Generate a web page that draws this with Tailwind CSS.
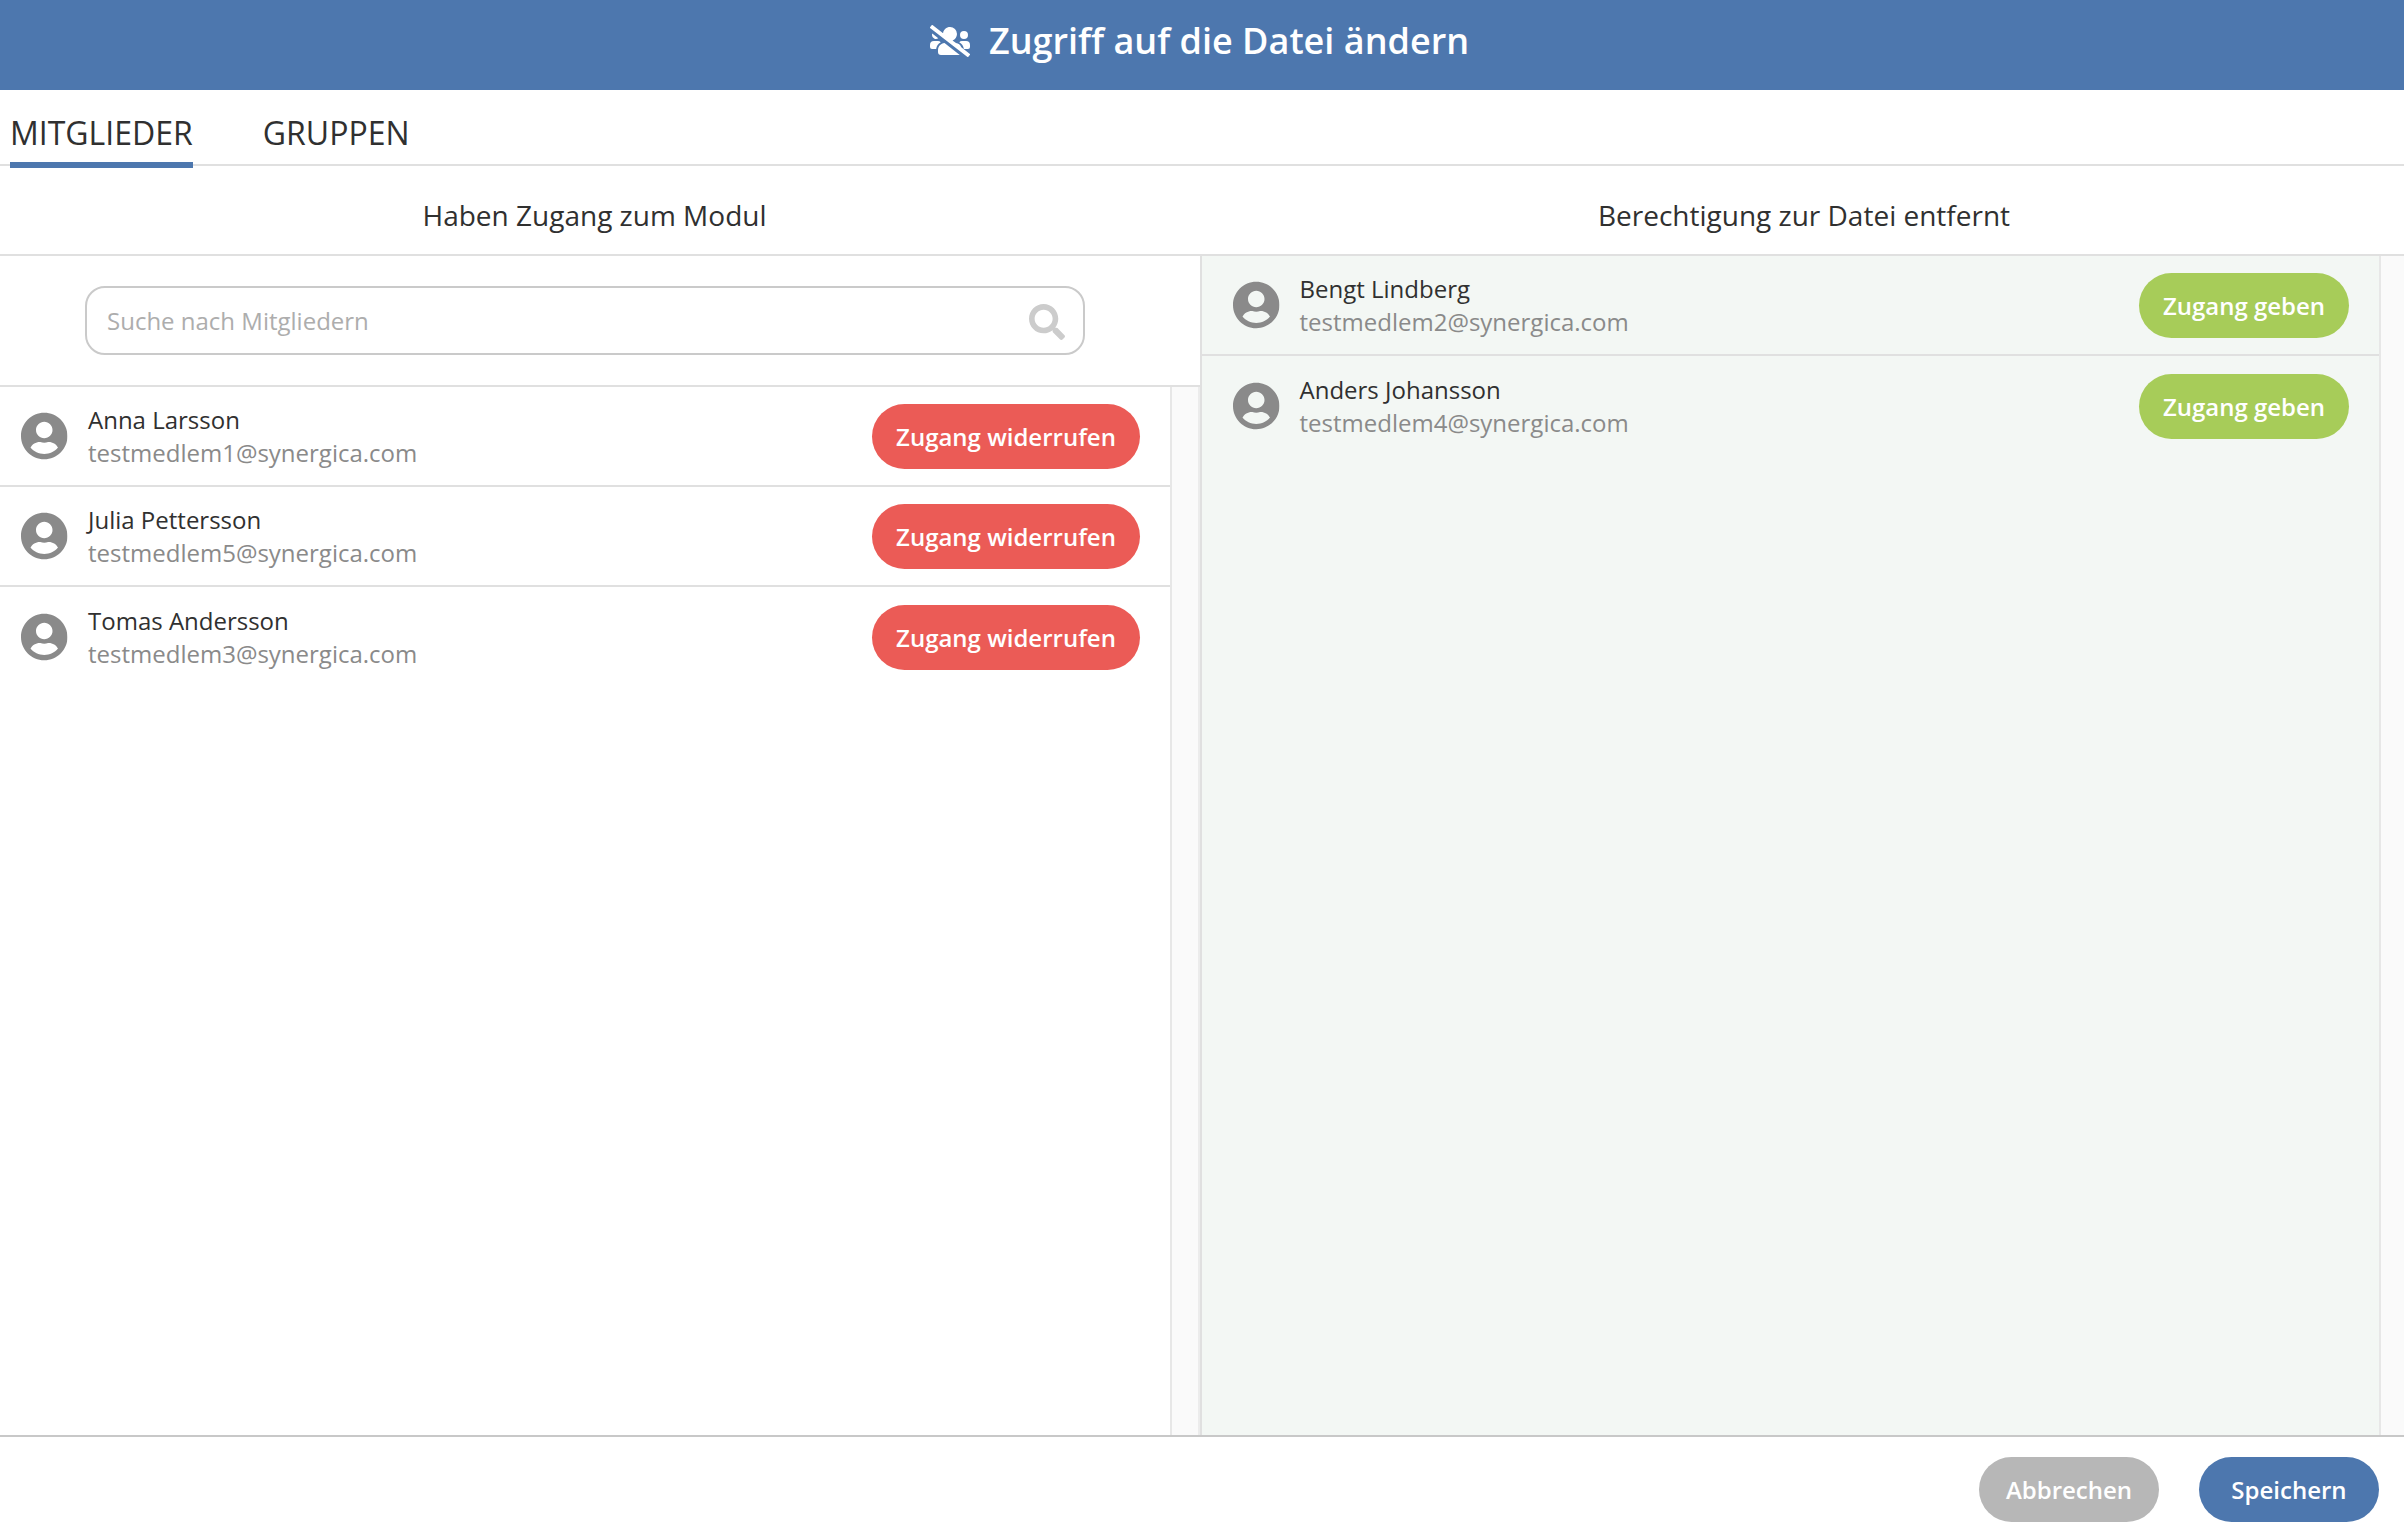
<!DOCTYPE html>
<html lang="de">
<head>
    <meta charset="utf-8"/>
    <title>Zugriff auf die Datei ändern</title>
    <script src="https://cdn.jsdelivr.net/npm/@tailwindcss/browser@4"></script>
</head>
<body class="bg-white text-[#303030] font-['Open_Sans',sans-serif] text-[24px] leading-[33px]">
    <!-- Icons -->
    <svg class="hidden">
        <symbol id="icon-user" viewBox="0 0 496 512">
            <path fill="currentColor" d="M248 8C111 8 0 119 0 256s111 248 248 248 248-111 248-248S385 8 248 8zm0 96c48.6 0 88 39.4 88 88s-39.4 88-88 88-88-39.4-88-88 39.4-88 88-88zm0 344c-58.7 0-111.3-26.6-146.5-68.2 18.8-35.4 55.6-59.8 98.5-59.8 2.4 0 4.8.4 7.1 1.1 13 4.2 26.6 6.9 40.9 6.9 14.3 0 28-2.7 40.9-6.9 2.3-.7 4.7-1.1 7.1-1.1 42.9 0 79.7 24.4 98.5 59.8C359.3 421.4 306.7 448 248 448z"/>
        </symbol>
    </svg>
    <div class="flex h-screen flex-col overflow-hidden">
        <!-- Title Bar -->
        <header class="flex h-[90px] shrink-0 items-center justify-center bg-[#4d77ae] pr-[5px] pb-[10px] text-white">
            <svg class="mt-[2px] mr-[19px] h-8 w-10" viewBox="0 0 640 512">
                <path fill="currentColor" d="M132.65,212.32,36.21,137.78A63.4,63.4,0,0,0,32,160a63.84,63.84,0,0,0,100.65,52.32Zm40.44,62.28A63.79,63.79,0,0,0,128,256H64A64.06,64.06,0,0,0,0,320v32a32,32,0,0,0,32,32H97.91A146.62,146.62,0,0,1,173.09,274.6ZM544,224a64,64,0,1,0-64-64A64.06,64.06,0,0,0,544,224ZM500.56,355.11a114.24,114.24,0,0,0-84.47-65.28L361,247.23c41.46-16.3,71-55.92,71-103.23A111.93,111.93,0,0,0,320,32c-57.14,0-103.69,42.83-110.6,98.08L45.46,3.38A16,16,0,0,0,23,6.19L3.37,31.46A16,16,0,0,0,6.18,53.91L594.53,508.63A16,16,0,0,0,617,505.82l19.64-25.27a16,16,0,0,0-2.81-22.45ZM128,403.21V432a48,48,0,0,0,48,48H464a47.45,47.45,0,0,0,12.57-1.87L232,289.13C173.74,294.83,128,343.42,128,403.21ZM576,256H512a63.79,63.79,0,0,0-45.09,18.6A146.29,146.29,0,0,1,542,384h66a32,32,0,0,0,32-32V320A64.06,64.06,0,0,0,576,256Z"/>
            </svg>
            <h1 class="text-[36px] font-semibold leading-[49px]">Zugriff auf die Datei ändern</h1>
        </header>

        <!-- Tabs -->
        <nav class="flex h-[76px] shrink-0 gap-[70px] border-b-2 border-[#e0e0e0] pl-[10px] text-[32px] leading-[44px]">
            <button class="h-[78px] border-b-6 border-[#4d77ae] pt-[13px]">MITGLIEDER</button>
            <button class="h-[78px] border-b-6 border-transparent pt-[13px]">GRUPPEN</button>
        </nav>

        <!-- Column Titles -->
        <div class="flex h-[90px] shrink-0 items-center border-b-2 border-[#e0e0e0] pt-[10px] text-[28px] leading-[38px]">
            <h2 class="w-[1189px] text-center">Haben Zugang zum Modul</h2>
            <h2 class="ml-[16px] w-[1198px] text-center">Berechtigung zur Datei entfernt</h2>
        </div>

        <!-- Main Content -->
        <main class="flex flex-1">
            <!-- Left Section -->
            <section class="flex w-[1202px] flex-col border-r-2 border-[#e0e0e0]">
                <div class="h-[131px] border-b-2 border-[#e0e0e0] pt-[30px] pl-[85px]">
                    <div class="flex h-[69px] w-[1000px] items-center justify-between rounded-[20px] border-2 border-[#cacaca] pr-[18px] pl-[20px]">
                        <input class="w-[800px] outline-none placeholder:text-[#adadad]" type="text" placeholder="Suche nach Mitgliedern"/>
                        <svg class="mt-[2px] size-9 text-[#cccccc]" viewBox="0 0 512 512">
                            <path fill="currentColor" d="M505 442.7L405.3 343c-4.5-4.5-10.6-7-17-7H372c27.6-35.3 44-79.7 44-128C416 93.1 322.9 0 208 0S0 93.1 0 208s93.1 208 208 208c48.3 0 92.7-16.4 128-44v16.3c0 6.4 2.5 12.5 7 17l99.7 99.7c9.4 9.4 24.6 9.4 33.9 0l28.3-28.3c9.4-9.4 9.4-24.6.1-34zM208 336c-70.7 0-128-57.2-128-128 0-70.7 57.2-128 128-128 70.7 0 128 57.2 128 128 0 70.7-57.2 128-128 128z"/>
                        </svg>
                    </div>
                </div>
                <div class="flex flex-1">
                    <ul class="w-[1170px]">
                        <li class="flex h-[100px] items-start border-b-2 border-[#e0e0e0] pt-[17px] pr-[30px] pl-[21px]">
                            <svg class="mt-[8px] h-[48px] w-[46.5px] text-[#8a8a8a]"><use href="#icon-user"/></svg>
                            <div class="-mt-px ml-[20.5px] flex-1">
                                <p>Anna Larsson</p>
                                <p class="text-[#8a8a8a]">testmedlem1@synergica.com</p>
                            </div>
                            <button class="h-[65px] w-[268px] rounded-full bg-[#eb5b56] font-semibold text-white">Zugang widerrufen</button>
                        </li>
                        <li class="flex h-[100px] items-start border-b-2 border-[#e0e0e0] pt-[17px] pr-[30px] pl-[21px]">
                            <svg class="mt-[8px] h-[48px] w-[46.5px] text-[#8a8a8a]"><use href="#icon-user"/></svg>
                            <div class="-mt-px ml-[20.5px] flex-1">
                                <p>Julia Pettersson</p>
                                <p class="text-[#8a8a8a]">testmedlem5@synergica.com</p>
                            </div>
                            <button class="h-[65px] w-[268px] rounded-full bg-[#eb5b56] font-semibold text-white">Zugang widerrufen</button>
                        </li>
                        <li class="flex h-[100px] items-start pt-[18px] pr-[30px] pl-[21px]">
                            <svg class="mt-[8px] h-[48px] w-[46.5px] text-[#8a8a8a]"><use href="#icon-user"/></svg>
                            <div class="-mt-px ml-[20.5px] flex-1">
                                <p>Tomas Andersson</p>
                                <p class="text-[#8a8a8a]">testmedlem3@synergica.com</p>
                            </div>
                            <button class="h-[65px] w-[268px] rounded-full bg-[#eb5b56] font-semibold text-white">Zugang widerrufen</button>
                        </li>
                    </ul>
                    <!-- Scrollbar track -->
                    <div class="w-[30px] border-x-2 border-l-[#e7e7e7] border-r-[#ececec] bg-[#fafafa]"></div>
                </div>
            </section>

            <!-- Right Section -->
            <section class="flex flex-1 bg-[#f3f7f4]">
                <ul class="w-[1177px]">
                    <li class="flex h-[100px] items-start border-b-2 border-[#e0e0e0] pt-[17px] pr-[30px] pl-[31px]">
                        <svg class="mt-[8px] h-[48px] w-[46.5px] text-[#8a8a8a]"><use href="#icon-user"/></svg>
                        <div class="-mt-px ml-[20px] flex-1">
                            <p>Bengt Lindberg</p>
                            <p class="text-[#8a8a8a]">testmedlem2@synergica.com</p>
                        </div>
                        <button class="h-[65px] w-[210px] rounded-full bg-[#a7cc59] font-semibold text-white">Zugang geben</button>
                    </li>
                    <li class="flex h-[100px] items-start pt-[18px] pr-[30px] pl-[31px]">
                        <svg class="mt-[8px] h-[48px] w-[46.5px] text-[#8a8a8a]"><use href="#icon-user"/></svg>
                        <div class="-mt-px ml-[20px] flex-1">
                            <p>Anders Johansson</p>
                            <p class="text-[#8a8a8a]">testmedlem4@synergica.com</p>
                        </div>
                        <button class="h-[65px] w-[210px] rounded-full bg-[#a7cc59] font-semibold text-white">Zugang geben</button>
                    </li>
                </ul>
                <!-- Scrollbar track -->
                <div class="flex-1 border-l-2 border-[#e7e7e7] bg-[#fafafa]"></div>
            </section>
        </main>

        <!-- Bottom Bar -->
        <footer class="flex h-[103px] shrink-0 justify-end gap-10 border-t-2 border-[#c8c8c8] pt-[20px] pr-[25px]">
            <button class="h-[65px] w-[180px] rounded-full bg-[#b7b7b7] font-semibold text-white">Abbrechen</button>
            <button class="h-[65px] w-[180px] rounded-full bg-[#4d77ae] font-semibold text-white">Speichern</button>
        </footer>
    </div>
</body>
</html>
